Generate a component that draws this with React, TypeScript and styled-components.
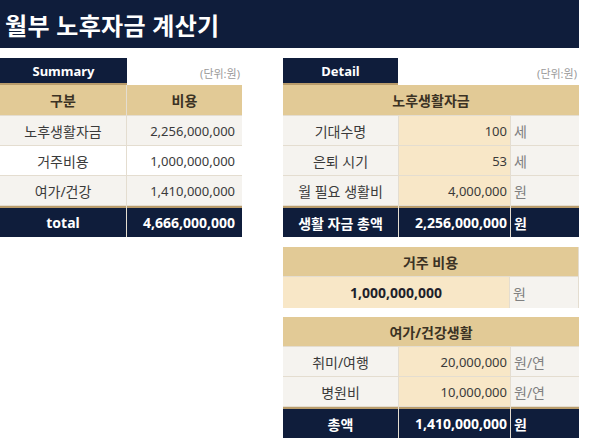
import React from "react";
import styled, { createGlobalStyle, css } from "styled-components";

const colors = {
    navy: "#0f1d3b",
    tan: "#e2ca96",
    tanDark: "#b99c6b",
    light: "#f5f3ef",
    cream: "#f8e7c7",
    line: "#e4ddd0",
    text: "#3a3a3a",
    unit: "#808080",
};

const GlobalStyle = createGlobalStyle`
    body {
        margin: 0;
        background: #ffffff;
        font-family: "Noto Sans", "Noto Sans CJK KR", sans-serif;
        color: ${colors.text};
    }
`;

type Tone = "light" | "white" | "cream" | "tan" | "navy";
type Align = "left" | "center" | "right";

const toneBg: Record<Tone, string> = {
    light: colors.light,
    white: "#ffffff",
    cream: colors.cream,
    tan: colors.tan,
    navy: colors.navy,
};

const summaryRows = [
    { name: "노후생활자금", value: "2,256,000,000", tone: "light" as Tone },
    { name: "거주비용", value: "1,000,000,000", tone: "white" as Tone },
    { name: "여가/건강", value: "1,410,000,000", tone: "light" as Tone },
];

const livingRows = [
    { name: "기대수명", value: "100", unit: "세" },
    { name: "은퇴 시기", value: "53", unit: "세" },
    { name: "월 필요 생활비", value: "4,000,000", unit: "원" },
];

const leisureRows = [
    { name: "취미/여행", value: "20,000,000", unit: "원/연" },
    { name: "병원비", value: "10,000,000", unit: "원/연" },
];

export default function App() {
    return (
        <Page>
            <GlobalStyle />
            <TitleBar>월부 노후자금 계산기</TitleBar>
            <Content>
                <Panel $width={242}>
                    <PanelHead>
                        <Tab $width={127}>Summary</Tab>
                        <UnitNote>(단위:원)</UnitNote>
                    </PanelHead>
                    <Grid $cols="126px 115px">
                        <Cell $tone="tan" $bold $h={30}>구분</Cell>
                        <Cell $tone="tan" $bold $h={30}>비용</Cell>
                        {summaryRows.map((r) => (
                            <React.Fragment key={r.name}>
                                <Cell $tone={r.tone}>{r.name}</Cell>
                                <Cell $tone={r.tone} $align="right" $num>{r.value}</Cell>
                            </React.Fragment>
                        ))}
                        <Cell $tone="navy" $bold $total $h={31}>total</Cell>
                        <Cell $tone="navy" $bold $total $h={31} $align="right">4,666,000,000</Cell>
                    </Grid>
                </Panel>

                <Panel $width={296}>
                    <PanelHead>
                        <Tab $width={115}>Detail</Tab>
                        <UnitNote>(단위:원)</UnitNote>
                    </PanelHead>

                    <Grid $cols="115px 111px 68px">
                        <Cell $tone="tan" $bold $span={3} $h={30}>노후생활자금</Cell>
                        {livingRows.map((r) => (
                            <React.Fragment key={r.name}>
                                <Cell $tone="light">{r.name}</Cell>
                                <Cell $tone="cream" $align="right" $tight $num>{r.value}</Cell>
                                <Cell $tone="light" $align="left" $unit>{r.unit}</Cell>
                            </React.Fragment>
                        ))}
                        <Cell $tone="navy" $bold $total $h={31}>생활 자금 총액</Cell>
                        <Cell $tone="navy" $bold $total $h={31} $align="right" $tight>2,256,000,000</Cell>
                        <Cell $tone="navy" $bold $total $h={31} $align="left" $tight>원</Cell>
                    </Grid>

                    <Block $top={10}>
                        <Grid $cols="226px 68px">
                            <Cell $tone="tan" $bold $span={2}>거주 비용</Cell>
                            <Cell $tone="cream" $bold $h={31} $dark>1,000,000,000</Cell>
                            <Cell $tone="light" $align="left" $unit $h={31}>원</Cell>
                        </Grid>
                    </Block>

                    <Block $top={9}>
                        <Grid $cols="115px 111px 68px">
                            <Cell $tone="tan" $bold $span={3}>여가/건강생활</Cell>
                            {leisureRows.map((r) => (
                                <React.Fragment key={r.name}>
                                    <Cell $tone="light">{r.name}</Cell>
                                    <Cell $tone="cream" $align="right" $tight $num>{r.value}</Cell>
                                    <Cell $tone="light" $align="left" $unit>{r.unit}</Cell>
                                </React.Fragment>
                            ))}
                            <Cell $tone="navy" $bold $total $h={31}>총액</Cell>
                            <Cell $tone="navy" $bold $total $h={31} $align="right" $tight>1,410,000,000</Cell>
                            <Cell $tone="navy" $bold $total $h={31} $align="left" $tight>원</Cell>
                        </Grid>
                    </Block>
                </Panel>
            </Content>
        </Page>
    );
}

const Page = styled.div`
    width: 579px;
`;

const TitleBar = styled.header`
    height: 48px;
    display: flex;
    align-items: center;
    padding-left: 5px;
    background: ${colors.navy};
    color: #ffffff;
    font-size: 24px;
    font-weight: 700;
    letter-spacing: 0.3px;
`;

const Content = styled.main`
    display: flex;
    justify-content: space-between;
    padding-top: 10px;
`;

const Panel = styled.section<{ $width: number }>`
    width: ${(p) => p.$width}px;
    display: flex;
    flex-direction: column;
`;

const PanelHead = styled.div`
    display: flex;
    justify-content: space-between;
    align-items: center;
    height: 27px;
`;

const Tab = styled.div<{ $width: number }>`
    width: ${(p) => p.$width}px;
    height: 27px;
    box-sizing: border-box;
    display: flex;
    align-items: center;
    justify-content: center;
    background: ${colors.navy};
    border-bottom: 2px solid ${colors.tanDark};
    color: #ffffff;
    font-size: 13px;
    font-weight: 700;
`;

const UnitNote = styled.span`
    font-size: 11px;
    color: #9a9a9a;
    padding-right: 2px;
    margin-top: 2px;
`;

const Block = styled.div<{ $top: number }>`
    margin-top: ${(p) => p.$top}px;
`;

const Grid = styled.div<{ $cols: string }>`
    display: grid;
    grid-template-columns: ${(p) => p.$cols};
    gap: 1px;
    background: ${colors.line};
`;

const Cell = styled.div<{
    $tone: Tone;
    $align?: Align;
    $bold?: boolean;
    $total?: boolean;
    $span?: number;
    $h?: number;
    $tight?: boolean;
    $unit?: boolean;
    $num?: boolean;
    $dark?: boolean;
}>`
    box-sizing: border-box;
    height: ${(p) => p.$h ?? 29}px;
    display: flex;
    align-items: center;
    justify-content: ${(p) =>
        p.$align === "right" ? "flex-end" : p.$align === "left" ? "flex-start" : "center"};
    padding: 0 ${(p) => (p.$tight ? 3 : 7)}px;
    ${(p) => p.$unit && css`padding-left: 3px;`}
    ${(p) => p.$span && css`grid-column: span ${p.$span};`}
    background: ${(p) => toneBg[p.$tone]};
    font-size: ${(p) => (p.$num ? 13 : 14)}px;
    font-weight: ${(p) => (p.$bold ? 700 : 400)};
    color: ${(p) =>
        p.$total ? "#ffffff" : p.$unit ? colors.unit : p.$dark ? "#1f1f2a" : p.$bold ? "#3b3224" : colors.text};
    white-space: nowrap;
    ${(p) =>
        p.$total &&
        css`
            box-shadow: inset 0 2px 0 ${colors.tanDark};
            padding-top: 2px;
        `}
`;
